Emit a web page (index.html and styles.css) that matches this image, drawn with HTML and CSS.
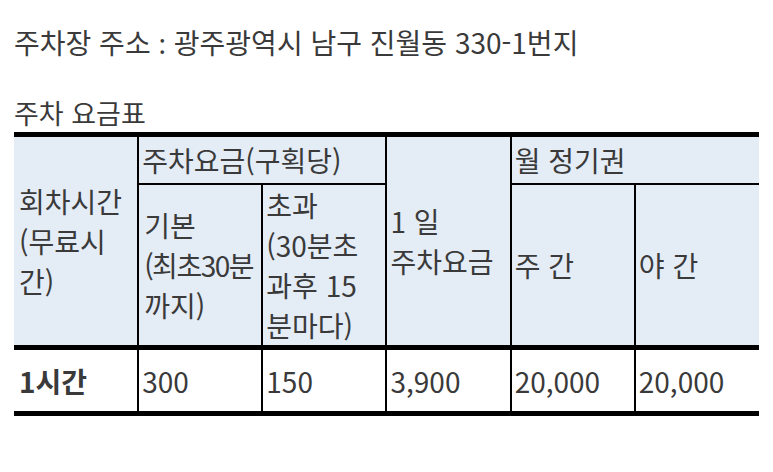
FILE: index.html
```html
<!DOCTYPE html>
<html lang="ko">
<head>
<meta charset="utf-8">
<title>주차 요금표</title>
<link rel="stylesheet" href="styles.css">
</head>
<body>
<main class="page">
  <p class="address">주차장 주소 <span class="colon">:</span> 광주광역시 남구 진월동 330-1번지</p>
  <h2 class="caption">주차 요금표</h2>
  <table class="fees">
    <colgroup>
      <col class="c1"><col class="c2"><col class="c3"><col class="c4"><col class="c5"><col class="c6">
    </colgroup>
    <thead>
      <tr class="h1">
        <th rowspan="2">회차시간<br>(무료시<br>간)</th>
        <th colspan="2">주차요금(구획당)</th>
        <th rowspan="2">1 일<br>주차요금</th>
        <th colspan="2">월 정기권</th>
      </tr>
      <tr class="h2">
        <th>기본<br><span class="tight">(최초30분</span><br>까지)</th>
        <th>초과<br>(30분초<br>과후 15<br>분마다)</th>
        <th>주 간</th>
        <th>야 간</th>
      </tr>
    </thead>
    <tbody>
      <tr class="row">
        <td class="strong">1시간</td>
        <td>300</td>
        <td>150</td>
        <td>3,900</td>
        <td>20,000</td>
        <td>20,000</td>
      </tr>
    </tbody>
  </table>
</main>
</body>
</html>
```

FILE: styles.css
```css
html, body {
  margin: 0;
  padding: 0;
  background: #ffffff;
}

.page {
  padding: 24px 14px 0 14px;
  font-family: "Noto Sans CJK KR", "Noto Sans", sans-serif;
  color: #3a3a3a;
}

.address {
  margin: 0;
  font-size: 28px;
  line-height: 36px;
  font-weight: 400;
  padding-left: 0;
}

.colon {
  font-family: "Noto Sans", "Noto Sans CJK KR", sans-serif;
}

.caption {
  margin: 34px 0 0 0;
  font-size: 27px;
  line-height: 36px;
  font-weight: 400;
  padding-left: 0;
}

.fees {
  margin-top: 1px;
  width: 745px;
  table-layout: fixed;
  border-collapse: collapse;
  font-size: 28px;
  line-height: 40px;
  color: #3a3a3a;
}

.fees col { width: 124px; }

.fees th,
.fees td {
  text-align: left;
  vertical-align: middle;
  font-weight: 400;
  padding: 0 0 0 3px;
  border: 2px solid #000;
  white-space: nowrap;
}

.fees .tight {
  letter-spacing: -1.5px;
}

.fees th:first-child,
.fees td:first-child {
  border-left: none;
  padding-left: 5px;
}

.fees tr > :last-child {
  border-right: none;
}

.fees thead th {
  background: #e4ecf6;
}

.fees .h1 th {
  border-top: 5px solid #000;
  height: 46px;
}

.fees .h2 th {
  height: 157px;
}

.fees .h1 th[rowspan] {
  border-bottom: 5px solid #000;
}

.fees .h2 th {
  border-bottom: 5px solid #000;
}

.fees .row td {
  height: 61px;
  border-bottom: 5px solid #000;
  background: #fff;
}

.fees .strong {
  font-weight: 700;
}
```
